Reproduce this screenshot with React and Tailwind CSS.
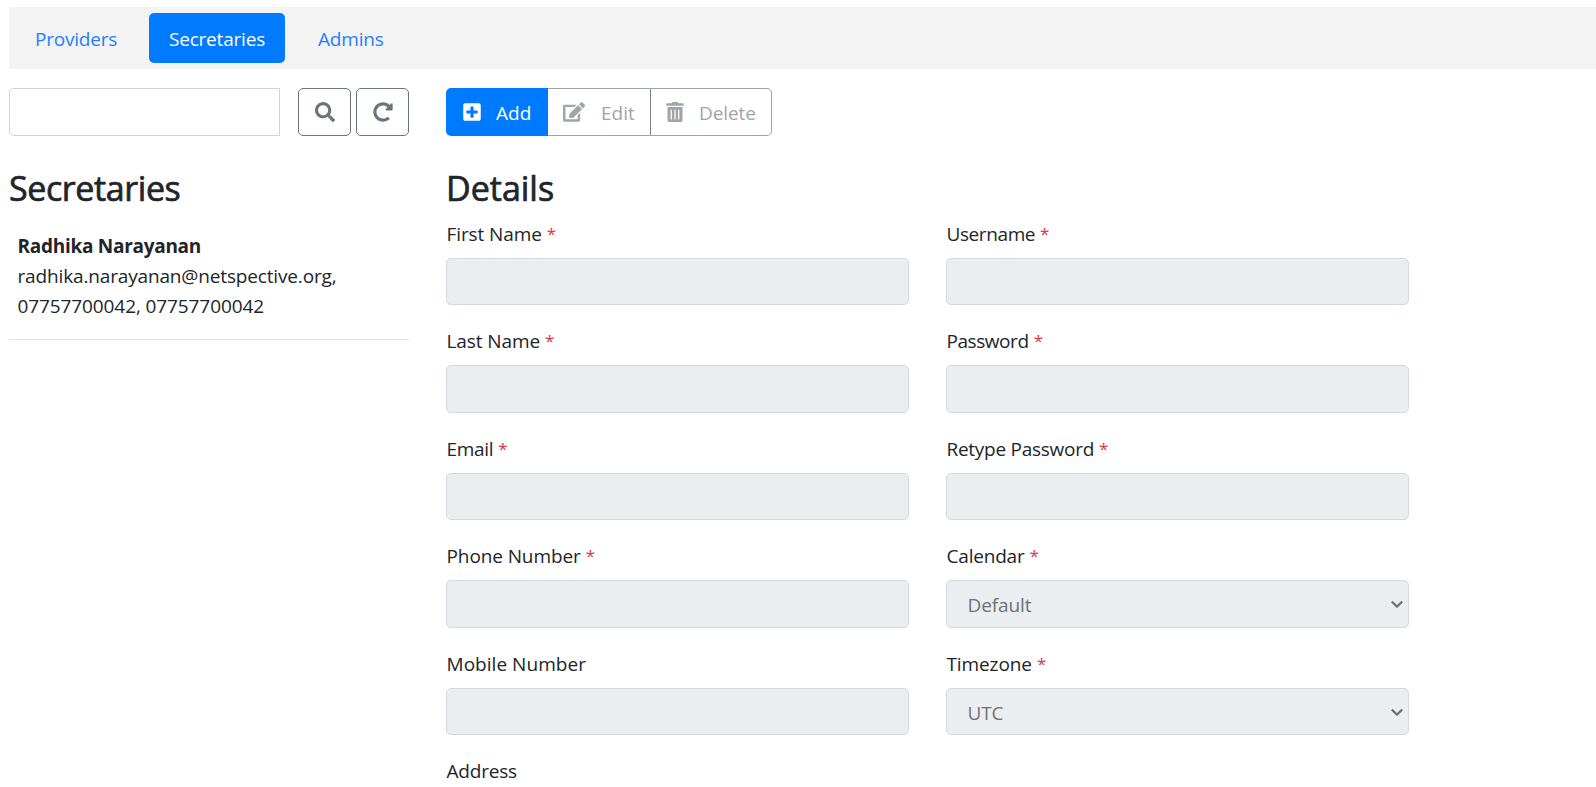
import { FaSearch, FaRedoAlt, FaPlusSquare, FaEdit, FaTrashAlt } from "react-icons/fa";

const leftFields = [
  { label: "First Name", required: true, tracking: "tracking-[-0.1px]" },
  { label: "Last Name", required: true, tracking: "tracking-[-0.1px]" },
  { label: "Email", required: true, tracking: "tracking-[-0.3px]" },
  { label: "Phone Number", required: true, tracking: "tracking-[-0.1px]" },
  { label: "Mobile Number", tracking: "tracking-[0.04px]" },
  { label: "Address", tracking: "tracking-[-0.2px]" },
];

const rightFields = [
  { label: "Username", required: true, tracking: "tracking-[-0.4px]" },
  { label: "Password", required: true, tracking: "tracking-[-0.44px]" },
  { label: "Retype Password", required: true, tracking: "tracking-[-0.27px]" },
  { label: "Calendar", required: true, value: "Default", tracking: "tracking-[-0.2px]" },
  { label: "Timezone", required: true, value: "UTC", tracking: "tracking-[-0.1px]" },
];

function Chevron() {
  return (
    <svg width="12" height="8" viewBox="0 0 12 8" fill="none" stroke="#6d7276" strokeWidth="2.2">
      <path d="M0.8 1.6 L6 6.6 L11.2 1.6" />
    </svg>
  );
}

function Field({ label, required, value, tracking }) {
  return (
    <div className="mb-5">
      <div className="mb-2.5 flex h-[30px] items-center gap-[5px] pt-[2px] pl-[0.5px] leading-[30px]">
        <span className={tracking}>{label}</span>
        {required && <span className="text-[17px] text-[#dc3545]">*</span>}
      </div>
      <div className="flex h-[47.5px] items-center justify-between rounded-[5px] border border-[#d3d9e0] bg-[#eaeef1] pr-[5px] pl-[20.5px] text-[#6d7276]">
        {value && <span className="pt-[3px] tracking-[-0.1px]">{value}</span>}
        {value && <Chevron />}
      </div>
    </div>
  );
}

export default function App() {
  return (
    <div className="h-[787px] overflow-hidden bg-white pt-[7px] pl-[9px] font-['Open_Sans','Noto_Sans',sans-serif] text-[19px] text-[#212529]">
      <nav className="flex h-[62px] items-center bg-[#f3f3f3] text-[#1f7fff]">
        <a className="flex h-[50px] w-[140px] items-center pt-[2px] pl-[26px]"><span className="tracking-[-0.22px]">Providers</span></a>
        <a className="flex h-[50px] w-[136px] items-center justify-center rounded-[5px] bg-[#007bff] pt-[2px] text-white"><span className="tracking-[-0.2px]">Secretaries</span></a>
        <a className="flex h-[50px] items-center pt-[2px] pl-[33px]"><span className="tracking-[-0.2px]">Admins</span></a>
      </nav>
      <div className="flex pt-[19px]">
        <aside className="w-[400px]">
          <div className="flex h-12">
            <input className="h-12 w-[271px] rounded-l-[5px] border border-[#ced4da] outline-none" />
            <button className="ml-[18px] flex h-12 w-[53px] items-center justify-center rounded-[5px] border border-[#6c757d] text-[#6c757d]"><FaSearch size={20} /></button>
            <button className="ml-[5px] flex h-12 w-[53px] items-center justify-center rounded-[5px] border border-[#6c757d] text-[#6c757d]"><FaRedoAlt size={20} /></button>
          </div>
          <h3 className="mt-[31px] text-[34px] leading-[42px] tracking-[-0.4px] [-webkit-text-stroke:0.7px_#212529]"><span>Secretaries</span></h3>
          <div className="mt-[22px] border-b border-[#e2e4e6] pb-[18px] pl-[8.5px] leading-[30px]">
            <div className="font-bold"><span className="tracking-[-0.28px]">Radhika Narayanan</span></div>
            <div><span className="tracking-[-0.15px]">radhika.narayanan@netspective.org,</span></div>
            <div><span className="tracking-[-0.1px]">07757700042, 07757700042</span></div>
          </div>
        </aside>
        <main className="ml-[37px]">
          <div className="flex h-12">
            <button className="flex h-12 w-[102px] items-center rounded-l-[5px] bg-[#007bff] pl-[16px] text-white"><FaPlusSquare size={20} /><span className="ml-[14px] pt-[2px]">Add</span></button>
            <button className="flex h-12 w-[102px] items-center border-y border-[#a0a5aa] pl-[15px] text-[#a0a5aa]"><FaEdit size={22} /><span className="ml-[16px] pt-[2px]">Edit</span></button>
            <button className="flex h-12 w-[122px] items-center rounded-r-[5px] border border-[#a0a5aa] border-l-[#7b838a] pl-[14px] text-[#a0a5aa]"><FaTrashAlt size={20} /><span className="ml-[14px] pt-[2px] tracking-[-0.1px]">Delete</span></button>
          </div>
          <h3 className="mt-[31px] text-[34px] leading-[42px] [-webkit-text-stroke:0.7px_#212529]"><span>Details</span></h3>
          <div className="mt-[8.8px] grid grid-cols-[463px_463px] gap-x-[37px]">
            <div>{leftFields.map((f) => <Field key={f.label} {...f} />)}</div>
            <div>{rightFields.map((f) => <Field key={f.label} {...f} />)}</div>
          </div>
        </main>
      </div>
    </div>
  );
}
